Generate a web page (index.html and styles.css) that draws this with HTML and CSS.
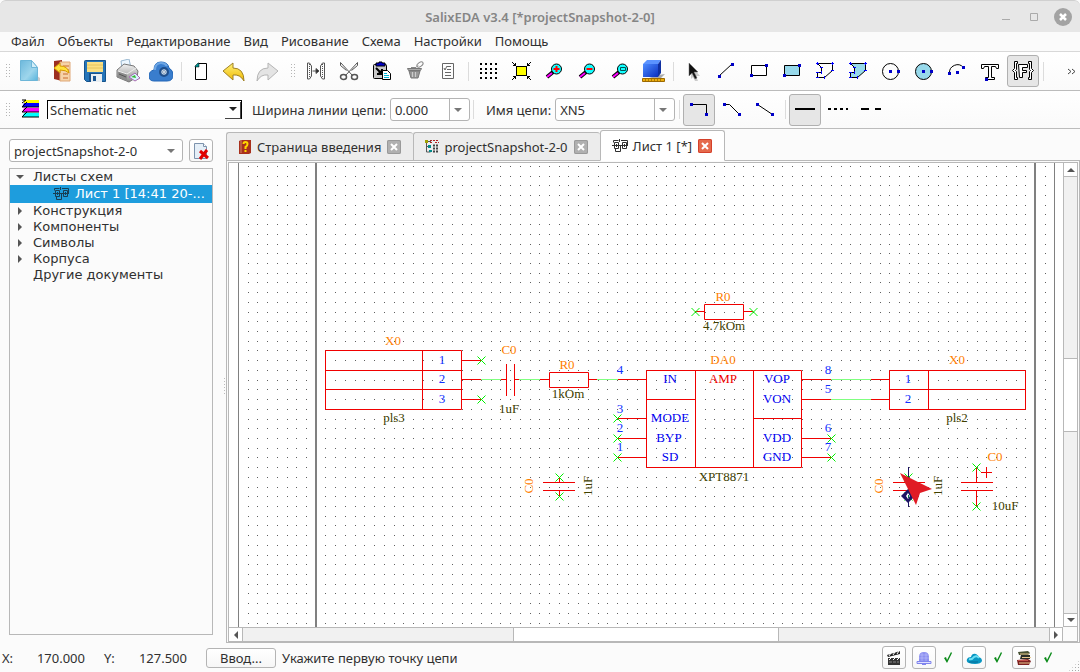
FILE: index.html
```html
<!DOCTYPE html>
<html lang="ru">
<head>
<meta charset="utf-8">
<title>SalixEDA v3.4</title>
<link rel="stylesheet" href="styles.css">
</head>
<body>
<svg class="defs" aria-hidden="true">
  <defs>
    <linearGradient id="sky" x1="0" y1="0" x2="1" y2="1"><stop offset="0" stop-color="#6db8dc"/><stop offset=".6" stop-color="#9ed6ec"/><stop offset="1" stop-color="#58b4dc"/></linearGradient>
    <linearGradient id="gold" x1="0" y1="0" x2="0" y2="1"><stop offset="0" stop-color="#fff27a"/><stop offset="1" stop-color="#f0b800"/></linearGradient>
    <linearGradient id="steel" x1="0" y1="0" x2="0" y2="1"><stop offset="0" stop-color="#f2f2f2"/><stop offset="1" stop-color="#8a8a8a"/></linearGradient>
    <linearGradient id="cobalt" x1="0" y1="0" x2="1" y2="1"><stop offset="0" stop-color="#4d8cff"/><stop offset="1" stop-color="#0a2fc0"/></linearGradient>
    <path id="cross" d="M-4-4L4 4M-4 4L4-4"/>
    <rect id="node" x="-1.500" y="-1.500" width="3" height="3" fill="#0000c8" stroke="none"/>
    <g id="sheet" fill="none" stroke="currentColor">
      <path d="M2.500 4.500h4v6h-4zM10.500 4.500h4v6h-4zM0 7.500h16M1.500 4.500v-2h5M9 2.500h6.500v5M7.500 1v3M3.500 10.500v3h5v-6M4.500 6v3M12.500 6v3"/>
    </g>
    <path id="tick" d="M1 6l2-1 1 3L8 0l1 1-5 10z" fill="#0a8a18"/>
  </defs>
</svg>
<div class="window">
  <header class="titlebar">
    <h1 class="title">SalixEDA v3.4 [*projectSnapshot-2-0]</h1>
    <div class="window-buttons">
      <button class="win" aria-label="Свернуть"><svg width="10" height="10"><path d="M1 7.500h8" stroke="#aaa"/></svg></button>
      <button class="win" aria-label="Развернуть"><svg width="10" height="10"><path d="M1.500 1.500h7v7h-7z" fill="none" stroke="#aaa"/></svg></button>
      <button class="win" aria-label="Закрыть"><svg width="18" height="18"><circle cx="9" cy="9" r="9" fill="#a3a3a3"/><path d="M6 6l6 6M12 6l-6 6" stroke="#fff" stroke-width="2.500"/></svg></button>
    </div>
  </header>
  <nav class="menubar">
    <button>Файл</button><button>Объекты</button><button>Редактирование</button><button>Вид</button><button>Рисование</button><button>Схема</button><button>Настройки</button><button>Помощь</button>
  </nav>

  <div class="toolbar">
    <i class="handle"></i>
    <button class="tool" aria-label="Новый"><svg width="24" height="24"><path d="M5 22h18v-3l-3-2z" fill="#ccc"/><path d="M3.500 1.500h11l6 7v13h-17z" fill="url(#sky)" stroke="#6db6d8"/><path d="M14.500 1.500v7h6z" fill="#d2eef8" stroke="#6db6d8"/></svg></button>
    <button class="tool" aria-label="Открыть"><svg width="24" height="24"><path d="M4 2l8-1v21l-8-2z" fill="#9c2f20"/><path d="M10 3h10v19H10z" fill="#f6d3a8" stroke="#dfa878"/><path d="M13 7h6M13 11h6M13 15h5M13 19h5" stroke="#c86a2e"/><path d="M4 9l6-5v3q8 0 9 7-3-3-9-3v3z" fill="#ffe23c" stroke="#d79a00"/></svg></button>
    <button class="tool" aria-label="Сохранить"><svg width="24" height="24"><path d="M1.500 2.500q0-1 1-1h20v21h-19l-2-2z" fill="#2675b9" stroke="#16548c"/><path d="M4 3h16v10H4z" fill="#f9df83"/><path d="M4 6h16M4 9h16" stroke="#e4c35d"/><path d="M6 14h13v9H6z" fill="#18528b"/><path d="M8 15h11v8H8z" fill="#e8eef2"/><path d="M10 17h3v5h-3z" fill="#195591"/></svg></button>
    <button class="tool" aria-label="Печать"><svg width="24" height="24"><path d="M5 2l8-2 2 9-9 1z" fill="#edf7ff" stroke="#9ab8d0"/><path d="M1 11l7-6 10 2 4 5-1 6-8 5-12-5z" fill="url(#steel)" stroke="#777"/><path d="M2 12l9 3v7l-9-4z" fill="#8c8c8c"/><path d="M2 12l9 3 9-6" fill="none" stroke="#eee"/><path d="M3 15l7 3" stroke="#555"/><path d="M13 18l6-4 5 5-5 3z" fill="#d9f2ff" stroke="#a76ab0"/><path d="M15 18l4-2 1 3z" fill="#34b934"/></svg></button>
    <button class="tool" aria-label="Облако"><svg width="24" height="24"><path d="M5 22Q0 22 0 17q0-5 5-6 0-8 7-8 7 0 8 6 4 2 4 7 0 6-6 6z" fill="#397dcd" stroke="#2367b8"/><path d="M6 11q0-7 6-7 4 0 6 3" fill="none" stroke="#6da6e4" stroke-width="2"/><circle cx="15" cy="13" r="4" fill="#5f86b4" stroke="#1f4f8c" stroke-width="2"/><path d="M15 10v6M12 13h6M13 11l4 4M17 11l-4 4" stroke="#c8d3df"/></svg></button>
    <i class="sep"></i>
    <button class="tool" aria-label="Лист"><svg width="24" height="24"><path d="M9.500 4.500h8v16h-11v-13z" fill="#fff" stroke="#000"/><path d="M6 8V7l3-3h1v4z" fill="#009090" stroke="#000" stroke-width=".5"/></svg></button>
    <button class="tool" aria-label="Отменить"><svg width="24" height="24"><path d="M1 12l10-8v5q11 0 11 13-4-7-11-6v5z" fill="url(#gold)" stroke="#a08124"/></svg></button>
    <button class="tool" aria-label="Вернуть"><svg width="24" height="24"><path d="M23 12L13 4v5Q2 9 2 22q4-7 11-6v5z" fill="#e4e4e4" stroke="#b5b5b5"/></svg></button>
    <i class="handle wide"></i>
    <button class="tool" aria-label="Отразить"><svg width="24" height="24" fill="none" stroke="#555"><path d="M3.500 4v16M3.500 4h2l2 3v10l-2 3h-2M20.500 4v16h-2l-2-3V7l2-3zM8.500 12h6" /><path d="M12 9.500l3 2.500-3 2.500z" fill="#222"/><path d="M5.500 5v14M18.500 5v14" stroke-dasharray="1 1"/></svg></button>
    <button class="tool" aria-label="Вырезать"><svg width="24" height="24" fill="none" stroke="#555"><path d="M3.500 3.500l12 13M20.500 3.500l-12 13M3.500 3.500v3l6 5M20.500 3.500v3l-6 5"/><ellipse cx="6.500" cy="18" rx="3" ry="2.500" stroke-width="1.500"/><ellipse cx="17.500" cy="18" rx="3" ry="2.500" stroke-width="1.500"/></svg></button>
    <button class="tool" aria-label="Вставить"><svg width="24" height="24"><rect x="3.500" y="5.500" width="13" height="14" rx="1" fill="#c8c8c8" stroke="#000"/><path d="M6 4h3V3h3v1h3v3H6z" fill="#0000c8" stroke="#000"/><path d="M6 9l6 6M12 10v5H7" stroke="#000" stroke-width="2"/><path d="M12.500 11.500h5l3 3v6h-8z" fill="#fff" stroke="#000"/><path d="M14 14.500h3M14 16.500h5M14 18.500h5" stroke="#00b8d8"/></svg></button>
    <button class="tool" aria-label="Удалить"><svg width="24" height="24"><path d="M4.500 9.500h14l-1 2h-12z" fill="#aaa" stroke="#777"/><path d="M6 12h11l-2 7H8z" fill="#999" stroke="#777"/><path d="M9.500 13v5M12.500 13v5" stroke="#ccc"/><ellipse cx="17" cy="5.500" rx="3.500" ry="2" transform="rotate(-35 17 5.500)" fill="none" stroke="#888"/><path d="M8 8.500h5M13 8.500l2-2" stroke="#888"/></svg></button>
    <button class="tool" aria-label="Список"><svg width="24" height="24" fill="none" stroke="#666"><path d="M6.500 4.500h11v15h-11zM11 7.500h4M11 10.500h4M9 13.500h6M9 16.500h6M8 9l1 2 2-4"/></svg></button>
    <i class="sep"></i>
    <button class="tool" aria-label="Сетка"><svg width="24" height="24"><path d="M4 5h17M4 10h17M4 14h17M4 19h17" stroke="#000" stroke-width="2" stroke-dasharray="2 3"/></svg></button>
    <button class="tool" aria-label="Показать все"><svg width="24" height="24" stroke="#000"><rect x="7.500" y="7.500" width="10" height="9" fill="#ff0"/><path d="M3 3l4 4M22 3l-4 4M3 21l4-4M22 21l-4-4M4 6.500h2.500V4M21 6.500h-2.500V4M4 17.500h2.500V20M21 17.500h-2.500V20" fill="none"/></svg></button>
    <button class="tool" aria-label="Увеличить"><svg width="24" height="24"><path d="M5 18l6-5" stroke="#000" stroke-width="4"/><path d="M5 18l5-4" stroke="#f0f" stroke-width="2"/><circle cx="14.500" cy="10" r="5" fill="#1ff" stroke="#000"/><path d="M14.500 7v6M11.500 10h6" stroke="#f00" stroke-width="2"/></svg></button>
    <button class="tool" aria-label="Уменьшить"><svg width="24" height="24"><path d="M5 18l6-5" stroke="#000" stroke-width="4"/><path d="M5 18l5-4" stroke="#f0f" stroke-width="2"/><circle cx="14.500" cy="10" r="5" fill="#1ff" stroke="#000"/><path d="M11.500 10h6" stroke="#f00" stroke-width="2"/></svg></button>
    <button class="tool" aria-label="Масштаб окна"><svg width="24" height="24"><path d="M5 18l6-5" stroke="#000" stroke-width="4"/><path d="M5 18l5-4" stroke="#f0f" stroke-width="2"/><circle cx="14.500" cy="10" r="5" fill="#1ff" stroke="#000"/><path d="M12.500 8.500h5v3h-5z" fill="none" stroke="#055"/></svg></button>
    <button class="tool" aria-label="3D вид"><svg width="24" height="24"><path d="M17 16l7-1-4 4H8z" fill="#aaa"/><path d="M2 5l4-4h14l-3 4z" fill="#5b93ff"/><path d="M2 5h15v13H2z" fill="url(#cobalt)"/><path d="M17 5l3-4v13l-3 4z" fill="#1030a0"/><path d="M1.500 19.500h22v3h-22z" fill="#ecae0d" stroke="#9c6900"/><path d="M4 21h18" stroke="#704800" stroke-dasharray="1 2"/></svg></button>
    <i class="sep"></i>
    <button class="tool" aria-label="Выбор"><svg width="24" height="24"><path d="M10 6l9 11-4 0 2 5-3 0-2-4-2 2z" fill="#ccc"/><path d="M8 4v13l3-3 3 6 2-1-3-6h4z" fill="#111" stroke="#777" stroke-width=".5"/></svg></button>
    <button class="tool" aria-label="Линия"><svg width="24" height="24"><path d="M5 17L18 5" stroke="#000"/><use href="#node" x="5.500" y="17.500"/><use href="#node" x="18.500" y="5.500"/></svg></button>
    <button class="tool" aria-label="Прямоугольник"><svg width="24" height="24"><path d="M4.500 6.500h15v10h-15z" fill="#fff" stroke="#000"/><use href="#node" x="4.500" y="16.500"/><use href="#node" x="19.500" y="6.500"/></svg></button>
    <button class="tool" aria-label="Закрашенный прямоугольник"><svg width="24" height="24"><path d="M4.500 6.500h15v10h-15z" fill="#97d9eb" stroke="#000"/><use href="#node" x="4.500" y="16.500"/><use href="#node" x="19.500" y="6.500"/></svg></button>
    <button class="tool" aria-label="Ломаная"><svg width="24" height="24"><path d="M4.500 4.500h15v7l-8 7h-7v-5h4v-5z" fill="none" stroke="#000"/><path d="M3 4.500h3M4.500 3v3M18 4.500h3M19.500 3v3M18 11.500h3M11.500 17v3M3 18.500h3M3 13.500h3M8.500 12v3M7 8.500h3" stroke="#00f"/></svg></button>
    <button class="tool" aria-label="Многоугольник"><svg width="24" height="24"><path d="M4.500 4.500h15v7l-8 7h-7v-5h4v-5z" fill="#97d9eb" stroke="#000"/><path d="M3 4.500h3M4.500 3v3M18 4.500h3M19.500 3v3M18 11.500h3M11.500 17v3M3 18.500h3M3 13.500h3M8.500 12v3M7 8.500h3" stroke="#00f"/></svg></button>
    <button class="tool" aria-label="Окружность"><svg width="24" height="24"><circle cx="11.500" cy="12.500" r="8" fill="none" stroke="#000"/><use href="#node" x="11.500" y="12.500"/><use href="#node" x="19.500" y="12.500"/></svg></button>
    <button class="tool" aria-label="Круг"><svg width="24" height="24"><circle cx="11.500" cy="12.500" r="8" fill="#97d9eb" stroke="#000"/><use href="#node" x="11.500" y="12.500"/><use href="#node" x="19.500" y="12.500"/></svg></button>
    <button class="tool" aria-label="Дуга"><svg width="24" height="24"><path d="M4.500 14.500A8 8 0 0 1 18.500 8.500" fill="none" stroke="#000"/><use href="#node" x="4.500" y="14.500"/><use href="#node" x="12.500" y="13.500"/><use href="#node" x="18.500" y="8.500"/></svg></button>
    <button class="tool" aria-label="Надпись"><svg width="24" height="24"><path d="M3.500 5.500h17v4h-2l-1-2h-4v11h3v2h-9v-2h3v-11h-4l-1 2h-2z" fill="#fff" stroke="#000"/><use href="#node" x="8.500" y="20.500"/></svg></button>
    <button class="tool on" aria-label="Формула"><svg width="24" height="24" fill="#fff" stroke="#000"><path d="M6.500 2.500h-3v7l-2 2 2 2v7h3v-2h-1v-6l-1-1 1-1v-6h1zM17.500 2.500h3v7l2 2-2 2v7h-3v-2h1v-6l1-1-1-1v-6h-1zM7.500 5.500h9v3h-5v3h4v2h-4v5h-3z"/></svg></button>
    <i class="sep"></i>
    <button class="more" aria-label="Ещё"><svg width="9" height="7" fill="none" stroke="#444"><path d="M1 1l3 2.500L1 6M5 1l3 2.500L5 6"/></svg></button>
  </div>

  <div class="toolbar second">
    <i class="handle"></i>
    <svg class="layers" width="18" height="19"><path d="M3 1h15v3H3z" fill="#ff0"/><path d="M3 4h15v4H1z" fill="#00f"/><path d="M3 9h15v4H1z" fill="#f0f"/><path d="M3 14h15v4H1z" fill="#0ff"/><path d="M1 1h4L1 4M6 3L1 8h17M6 8l-5 5h17M6 13l-5 5h17" fill="none" stroke="#000"/></svg>
    <span class="combo classic"><select aria-label="Слой"><option>Schematic net</option></select></span>
    <label class="caption" for="width">Ширина линии цепи:</label>
    <span class="combo split narrow"><select id="width"><option>0.000</option></select></span>
    <i class="sep"></i>
    <label class="caption" for="net">Имя цепи:</label>
    <span class="combo split medium"><select id="net"><option>XN5</option></select></span>
    <i class="sep"></i>
    <button class="tool on" aria-label="Под прямым углом"><svg width="24" height="24"><path d="M4 6.500h15.500V17" fill="none" stroke="#000"/><use href="#node" x="4.500" y="6.500"/><use href="#node" x="19.500" y="16.500"/></svg></button>
    <button class="tool" aria-label="Под углом"><svg width="24" height="24"><path d="M4 6.500h5.500l10 10" fill="none" stroke="#000"/><use href="#node" x="4.500" y="6.500"/><use href="#node" x="19.500" y="16.500"/></svg></button>
    <button class="tool" aria-label="Свободно"><svg width="24" height="24"><path d="M4.500 6.500l15 10" stroke="#000"/><use href="#node" x="4.500" y="6.500"/><use href="#node" x="19.500" y="16.500"/></svg></button>
    <i class="sep"></i>
    <button class="tool on" aria-label="Сплошная"><svg width="24" height="24"><path d="M2 11h20" stroke="#000" stroke-width="2"/></svg></button>
    <button class="tool" aria-label="Пунктир"><svg width="24" height="24"><path d="M2 11h20" stroke="#000" stroke-width="2" stroke-dasharray="3"/></svg></button>
    <button class="tool" aria-label="Штрих"><svg width="24" height="24"><path d="M2 11h8M16 11h6" stroke="#000" stroke-width="2"/></svg></button>
  </div>

  <main class="workspace">
    <aside class="sidebar">
      <div class="project-row">
        <span class="combo project"><select aria-label="Проект"><option>projectSnapshot-2-0</option></select></span>
        <button class="box" aria-label="Закрыть проект"><svg width="18" height="18"><path d="M2.500 1.500h9l3 3v12h-12z" fill="#e5eff8" stroke="#7d93ad"/><path d="M11.500 1.500v3h3" fill="#fff" stroke="#7d93ad"/><path d="M8 9l8 7M15 8l-7 9" stroke="#e00000" stroke-width="3"/></svg></button>
      </div>
      <ul class="tree">
        <li><i class="arrow open"></i>Листы схем</li>
        <li class="selected"><svg width="16" height="16"><use href="#sheet"/></svg><span>Лист 1 [14:41 20-...</span></li>
        <li><i class="arrow"></i>Конструкция</li>
        <li><i class="arrow"></i>Компоненты</li>
        <li><i class="arrow"></i>Символы</li>
        <li><i class="arrow"></i>Корпуса</li>
        <li><i class="arrow none"></i>Другие документы</li>
      </ul>
    </aside>
    <div class="splitter"></div>
    <section class="documents">
      <div class="tabs">
        <div class="tab"><svg width="14" height="16"><path d="M1 2l2-1h10v13l-2 1H1z" fill="#a8301c"/><path d="M3 1v13" stroke="#d1866a"/><path d="M5.500 5q0-2 2-2t2 2-2 3v2M7.500 11v2" fill="none" stroke="#ffd700" stroke-width="2"/></svg><button class="tab-name">Страница введения</button><button class="tab-close" aria-label="Закрыть"><svg width="14" height="14"><path d="M4 4l6 6M10 4l-6 6" stroke="#fff" stroke-width="2"/></svg></button></div>
        <div class="tab"><svg width="14" height="16"><path d="M1.500 3v10h4M2 7.500h4M2 2.500h4" fill="none" stroke="#555"/><path d="M0 1h3v3H0z" fill="#a0a000"/><path d="M5 1.500h9M5 3.500h3M10 3.500h4" stroke="#b02020" stroke-dasharray="2 1"/><path d="M3 6h3v3H3zM4 11h3v2H4z" fill="#008a8a"/><path d="M8 6.500h5M8 9.500h5M8 12.500h6" stroke="#444" stroke-width="2" stroke-dasharray="2 1"/></svg><button class="tab-name">projectSnapshot-2-0</button><button class="tab-close" aria-label="Закрыть"><svg width="14" height="14"><path d="M4 4l6 6M10 4l-6 6" stroke="#fff" stroke-width="2"/></svg></button></div>
        <div class="tab current"><svg width="16" height="16"><use href="#sheet"/></svg><button class="tab-name">Лист 1 [*]</button><button class="tab-close hot" aria-label="Закрыть"><svg width="14" height="14"><path d="M4 4l6 6M10 4l-6 6" stroke="#fff" stroke-width="2"/></svg></button></div>
      </div>
      <div class="view">
        <div class="canvas">
          <svg class="scene" id="scene">
            <g transform="translate(-229 -163)">
              <path id="grid" class="grid"/>
              <g class="sheet-frame"><path class="thin" d="M238.500 163v900M1054.500 163v900"/><path class="thick" d="M316 163v900M1035 163v900"/></g>
              <path class="wire" d="M481 379.500h20M519 379.500h21M597 379.500h21M831 379.500h40M831 399.500h40"/>
              <g class="part">
                <path d="M325.500 350.500h136v59h-136zM325.500 370.500h136M325.500 389.500h136M422.500 350v59M462 360.500h19M462 379.500h19M462 399.500h19"/>
                <path d="M501 379.500h5M506.500 364v32M514.500 364v32M515 379.500h4"/>
                <path d="M540 379.500h9M549.500 372.500h39v15h-39zM589 379.500h8"/>
                <path d="M695 311.500h9M704.500 304.500h39v15h-39zM744 311.500h9"/>
                <path d="M646.500 370.500h155v97h-155zM695.500 370v97M753.500 370v97M646 399.500h49M753 418.500h48M618 379.500h28M617 418.500h29M617 438.500h29M617 457.500h29M802 379.500h29M802 399.500h29M802 438.500h29M802 457.500h29"/>
                <path d="M871 379.500h18M871 399.500h18M889.500 370.500h136v39h-136zM889 389.500h136M928.500 370v39"/>
                <path d="M543 482.500h32M543 490.500h32M559.500 477v5M559.500 491v6M893 482.500h32M893 490.500h32M961 482.500h32M961 490.500h32M976.500 468v14M976.500 491v15M981 472.500h11M986.500 467v11"/>
              </g>
              <g class="ends">
                <use href="#cross" x="481.500" y="360.500"/><use href="#cross" x="481.500" y="399.500"/>
                <use href="#cross" x="695.500" y="312"/><use href="#cross" x="753.500" y="312"/>
                <use href="#cross" x="617.500" y="418.500"/><use href="#cross" x="617.500" y="438.500"/><use href="#cross" x="617.500" y="457.500"/>
                <use href="#cross" x="831.500" y="438.500"/><use href="#cross" x="831.500" y="457.500"/>
                <use href="#cross" x="559.500" y="477.500"/><use href="#cross" x="559.500" y="496.500"/>
                <use href="#cross" x="908.500" y="477.500"/><use href="#cross" x="908.500" y="496.500"/>
                <use href="#cross" x="976.500" y="467.500"/><use href="#cross" x="976.500" y="506.500"/>
              </g>
              <g class="ref">
                <text x="393" y="345">X0</text><text x="509" y="354">C0</text><text x="567" y="369">R0</text><text x="723" y="301">R0</text><text x="723" y="364">DA0</text><text x="957" y="364">X0</text><text x="995" y="461">C0</text>
                <text transform="translate(533 486) rotate(-90)">C0</text><text transform="translate(883 486) rotate(-90)">C0</text>
              </g>
              <g class="value">
                <text x="394" y="422">pls3</text><text x="509" y="413">1uF</text><text x="568" y="398">1kOm</text><text x="724" y="330">4.7kOm</text><text x="724" y="481">XPT8871</text><text x="957" y="422">pls2</text><text x="1005" y="510">10uF</text>
                <text transform="translate(592 486) rotate(-90)">1uF</text><text transform="translate(942 486) rotate(-90)">1uF</text>
              </g>
              <g class="pin">
                <text x="442" y="364">1</text><text x="442" y="383">2</text><text x="442" y="403">3</text>
                <text x="620" y="374">4</text><text x="620" y="413">3</text><text x="620" y="432">2</text><text x="620" y="451">1</text>
                <text x="828" y="374">8</text><text x="828" y="393">5</text><text x="828" y="432">6</text><text x="828" y="451">7</text>
                <text x="908" y="383">1</text><text x="908" y="403">2</text>
              </g>
              <g class="pin-name">
                <text x="670" y="383">IN</text><text x="670" y="422">MODE</text><text x="669" y="442">BYP</text><text x="670" y="461">SD</text>
                <text x="777" y="383">VOP</text><text x="777" y="403">VON</text><text x="777" y="442">VDD</text><text x="777" y="461">GND</text>
                <text class="func" x="723" y="383">AMP</text>
              </g>
              <g class="pointer">
                <path d="M908.500 467v40" stroke="#1c1464"/>
                <path d="M908 489l7 7-7 7-7-7z" fill="#1c1464"/><path d="M908 493l2 3-2 3-2-3z" fill="#fff"/><path d="M908.500 495v3" stroke="#0a7a50"/>
                <path d="M900 473l32 16-12 4-4 12z" fill="#e01b24"/>
              </g>
            </g>
          </svg>
        </div>
        <div class="vbar"><button class="step up" aria-label="Вверх"></button><i class="thumb"></i><button class="step down" aria-label="Вниз"></button></div>
        <div class="hbar"><button class="step left" aria-label="Влево"></button><i class="thumb"></i><button class="step right" aria-label="Вправо"></button></div>
      </div>
    </section>
  </main>

  <footer class="statusbar">
    <span class="axis">X:</span><output class="coord">170.000</output>
    <span class="axis">Y:</span><output class="coord">127.500</output>
    <button class="enter">Ввод...</button>
    <span class="hint">Укажите первую точку цепи</span>
    <div class="services">
      <button class="box" aria-label="Видео"><svg width="16" height="16"><path d="M2 8h12v7H2z" fill="#333"/><path d="M1 5l13-4v3L2 7z" fill="#222"/><path d="M3 6l2-3M7 5l2-3M11 4l2-3M3 10l2-2M7 10l2-2M11 10l2-2" stroke="#fff"/><path d="M3 12h10" stroke="#888" stroke-dasharray="3 1"/></svg></button>
      <div class="service"><button class="box" aria-label="Сервер"><svg width="16" height="16"><path d="M3 11V7q0-5 5-5t5 5v4z" fill="#8c90f0"/><path d="M3 5h10M3 8h10M6 3v8M10 3v8" stroke="#c6c8ff" stroke-width=".5"/><path d="M1 11.500h14v2H1z" fill="#dfe0ff" stroke="#8085ee"/><path d="M6 14h4v1H6z" fill="#8085ee"/></svg></button><svg width="10" height="11"><use href="#tick"/></svg></div>
      <div class="service"><button class="box" aria-label="Облачное хранилище"><svg width="16" height="16"><path d="M3 13q-3-1-2-4 1-2 4-2 1-4 5-3 2 1 3 3 3 1 3 4-1 3-7 3-4 0-6-1z" fill="#0896c2"/><path d="M3 9q3 1 5-2 3-2 5 1" fill="none" stroke="#6de0f5" stroke-width="2"/><path d="M3 12h9" stroke="#066b96"/></svg></button><svg width="10" height="11"><use href="#tick"/></svg></div>
      <div class="service"><button class="box" aria-label="Библиотеки"><svg width="16" height="16"><path d="M2 2l10-1 2 2-2 2H3z" fill="#465032"/><path d="M5 5h9v4H4z" fill="#292d28"/><path d="M1 10l11-1 3 2-2 4H2z" fill="#7d2020"/><path d="M4 4h9M6 7.500h9M3 13h11" stroke="#e9c98e"/><path d="M2 10.500h10" stroke="#c4514b"/></svg></button><svg width="10" height="11"><use href="#tick"/></svg></div>
      <i class="grip"></i>
    </div>
  </footer>
</div>
<script src="grid.js"></script>
</body>
</html>
```

FILE: styles.css
```css
* { box-sizing: border-box; }
body { margin: 0; background: #fbfbfb; color: #303030; font: 13px/16px "Noto Sans", "Open Sans", sans-serif; }
button, select { font: inherit; color: inherit; margin: 0; padding: 0; border: 0; background: none; }
svg { display: block; flex: none; }
.defs { position: absolute; width: 0; height: 0; }
.window { display: flex; flex-direction: column; height: 100vh; overflow: hidden; }

.titlebar { display: grid; grid-template-columns: 1fr auto 1fr; align-items: center; height: 32px; padding: 0 8px; background: #e7e7e7; border-top: 1px solid #d0d0d0; border-radius: 6px 6px 0 0; flex: none; }
.title { grid-column: 2; margin: 0; font-size: 13px; line-height: 16px; font-weight: 600; color: #858585; }
.window-buttons { display: flex; justify-content: flex-end; align-items: center; gap: 12px; }
.win { min-width: 16px; display: grid; place-items: center; }

.menubar { display: flex; align-items: flex-start; gap: 13px; height: 20px; padding: 1px 11px 0; border-bottom: 1px solid #d8d8d8; flex: none; }

.toolbar { display: flex; align-items: center; gap: 1px; height: 39px; border-bottom: 1px solid #bcbcbc; background: linear-gradient(#fff, #fafafa); flex: none; }
.toolbar.second { height: 38px; }
.handle { flex: none; width: 12px; height: 16px; background: radial-gradient(circle, #b5b5b5 1px, transparent 1px) 5px 0 / 3px 3px repeat-y, radial-gradient(circle, #b5b5b5 1px, transparent 1px) 8px 0 / 3px 3px repeat-y; }
.handle.wide { width: 15px; background-position: 6px 0, 9px 0; }
.sep { flex: none; width: 6px; height: 19px; background: linear-gradient(#dcdcdc, #dcdcdc) 3px 0 / 1px 100% no-repeat; }
.tool { flex: none; width: 32px; height: 32px; display: grid; place-items: center; border: 1px solid transparent; border-radius: 3px; }
.tool.on { background: #e6e6e6; border-color: #b0b0b0; }
.more { margin-left: auto; margin-right: 4px; }
.layers { margin: 0 7px 3px 8px; }
.caption { margin: 0 3px 0 9px; white-space: nowrap; }

.combo { position: relative; flex: none; display: flex; height: 23px; border: 1px solid #b4b4b4; border-radius: 3px; background: #fff; }
.combo select { appearance: none; width: 100%; padding: 0 4px; outline: 0; }
.combo::after { content: ""; position: absolute; right: 7px; top: 9px; border: 4px solid transparent; border-top: 4px solid #777; border-bottom: 0; pointer-events: none; }
.combo.classic { width: 195px; height: 19px; border: 0; border-top: 1px solid #000; border-left: 1px solid #000; border-radius: 0; }
.combo.classic select { padding: 0 2px; border-right: 1px solid #000; }
.combo.classic::after { top: 6px; right: 5px; border-top-color: #222; }
.combo.classic::before { content: ""; position: absolute; right: 1px; bottom: 0; width: 15px; height: 16px; border-right: 1px solid #444; border-bottom: 1px solid #444; }
.combo.split::before { content: ""; position: absolute; right: 19px; top: 0; bottom: 0; border-left: 1px solid #b4b4b4; }
.narrow { width: 80px; margin-right: -1px; }
.medium { width: 120px; }

.workspace { flex: 1; min-height: 0; display: flex; }
.sidebar { width: 213px; padding: 10px 0 8px 9px; display: flex; flex-direction: column; gap: 6px; flex: none; }
.project-row { display: flex; gap: 6px; }
.combo.project { flex: 1; }
.box { width: 24px; height: 23px; display: grid; place-items: center; border: 1px solid #b4b4b4; border-radius: 3px; background: linear-gradient(#fff, #f8f8f8); flex: none; }
.tree { flex: 1; margin: 0; padding: 0; list-style: none; border: 1px solid #b8b8b8; font-family: "DejaVu Sans", sans-serif; }
.tree li { display: flex; align-items: center; height: 16px; white-space: nowrap; }
.tree .selected { height: 18px; padding-left: 43px; gap: 6px; background: #1e9ddd; color: #fff; }
.tree .selected svg { color: #183e55; }
.arrow { width: 23px; height: 8px; flex: none; }
.arrow::before { content: ""; display: block; width: 0; margin-left: 8px; border: 4px solid transparent; border-left: 4px solid #555; border-right: 0; }
.arrow.open::before { margin: 2px 0 0 6px; border: 4px solid transparent; border-top: 4px solid #555; border-bottom: 0; }
.arrow.none { visibility: hidden; }
.splitter { width: 13px; flex: none; display: flex; align-items: center; justify-content: flex-end; }
.splitter::before { content: ""; width: 3px; height: 18px; background: radial-gradient(circle, #bbb 1px, transparent 1px) 0 0 / 3px 3px; }

.documents { flex: 1; min-width: 0; display: flex; flex-direction: column; padding-top: 1px; }
.tabs { display: flex; align-items: flex-end; height: 31px; flex: none; position: relative; z-index: 1; }
.tab { display: flex; align-items: center; height: 29px; padding: 0 12px 0 11px; border: 1px solid #b8b8b8; border-right: 0; background: #ececec; border-radius: 3px 3px 0 0; }
.tab.current { height: 31px; border-right: 1px solid #b8b8b8; border-bottom-color: #fff; background: #fff; }
.tab-name { margin: 0 6px 0 5px; white-space: nowrap; }
.tab-close { width: 14px; height: 14px; background: #b0b0b0; border-radius: 2px; box-shadow: inset 0 0 0 1px #999; }
.tab-close.hot { background: #e56a4c; box-shadow: inset 0 0 0 1px #d4402a; }

.view { flex: 1; min-height: 0; margin-top: -1px; display: grid; grid-template: minmax(0, 1fr) 14px / minmax(0, 1fr) 14px; border: 3px double #b8b8b8; border-bottom: 2px solid #b8b8b8; }
.canvas { background: #fff; overflow: hidden; }
.scene { width: 100%; height: 100%; }
.vbar, .hbar { display: flex; background: #f1f1f1; }
.vbar { flex-direction: column; border-left: 1px solid #b8b8b8; }
.hbar { border-top: 1px solid #b8b8b8; }
.step { flex: none; width: 14px; height: 14px; display: grid; place-items: center; background: #fff; }
.step::before { content: ""; border: 4px solid transparent; }
.up, .down { width: 13px; }
.left, .right { height: 13px; }
.up { border-bottom: 1px solid #b8b8b8; }
.down { border-top: 1px solid #b8b8b8; border-bottom: 1px solid #b8b8b8; }
.left { border-right: 1px solid #b8b8b8; }
.right { border-left: 1px solid #b8b8b8; border-right: 1px solid #b8b8b8; }
.up::before { border-top: 0; border-bottom-color: #555; }
.down::before { border-bottom: 0; border-top-color: #555; }
.left::before { border-left: 0; border-right-color: #555; }
.right::before { border-right: 0; border-left-color: #555; }
.thumb { background: #fff; }
.vbar .thumb { height: 16%; margin: auto 0; border: solid #b8b8b8; border-width: 1px 0; }
.hbar .thumb { width: 32%; margin: 0 auto; border: solid #b8b8b8; border-width: 0 1px; }

.grid { stroke: #606060; shape-rendering: crispEdges; }
.thin, .thick { stroke: #808080; }
.thick { stroke-width: 2; }
.wire { stroke: #80ff80; }
.part { stroke: #f00000; fill: none; }
.ends { stroke: #00f000; }
.scene text { font: 13px "Liberation Serif", serif; text-anchor: middle; }
.ref { fill: #ff8000; }
.value { fill: #404000; }
.pin { fill: #1030ff; }
.pin-name { fill: #0000f0; }
.func { fill: #f00000; }

.statusbar { display: flex; align-items: center; height: 29px; padding-left: 2px; flex: none; }
.axis { width: 24px; }
.coord { width: 59px; text-align: right; margin-right: 19px; }
.enter { width: 70px; height: 20px; border: 1px solid #b4b4b4; border-radius: 3px; background: linear-gradient(#fff, #f6f6f6); }
.hint { margin-left: 6px; white-space: nowrap; }
.services { display: flex; align-items: center; gap: 6px; margin-left: auto; height: 100%; }
.service { display: flex; align-items: center; gap: 7px; }
.service + .service { margin-left: 3px; }
.grip { width: 12px; height: 12px; margin-left: 9px; align-self: flex-end; clip-path: polygon(100% 0, 100% 100%, 0 100%); background: radial-gradient(circle, #aaa 1px, transparent 1px) 0 0 / 3px 3px; }
```

FILE: grid.js
```js
// Fills the visible part of the sheet with grid points snapped to whole pixels.
const scene = document.getElementById('scene');
const grid = document.getElementById('grid');
const pitch = 9.72;

function drawGrid() {
  const right = 229 + scene.clientWidth;
  const bottom = 163 + scene.clientHeight;
  let d = '';
  for (let y = 166.3; y < bottom; y += pitch) {
    for (let i = 0, x = 248.2; x < Math.min(right, 1050); i += 1, x = 248.2 + i * pitch) {
      d += `M${Math.floor(x)} ${Math.floor(y) + 0.5}h1`;
    }
  }
  grid.setAttribute('d', d);
}

drawGrid();
window.addEventListener('resize', drawGrid);
```
